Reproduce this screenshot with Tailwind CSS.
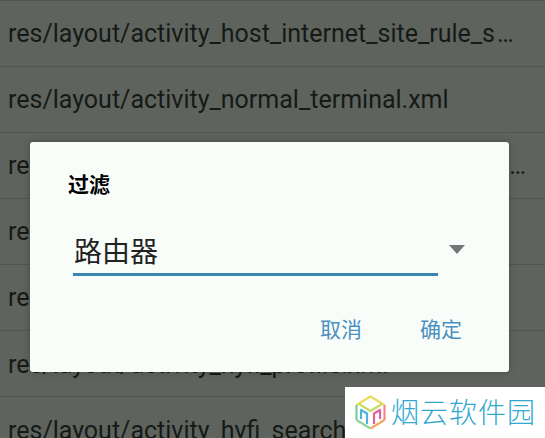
<!DOCTYPE html>
<html lang="en">
<head>
<meta charset="UTF-8">
<title>过滤</title>
<script src="https://cdn.jsdelivr.net/npm/@tailwindcss/browser@4"></script>
</head>
<body class="relative w-[545px] h-[438px] overflow-hidden bg-[#5f635e] font-['Roboto','Noto_Sans_CJK_SC',sans-serif]">
	<!-- list behind the dialog -->
	<div class="h-[438px] overflow-hidden text-[25px] text-[#151a16] whitespace-nowrap">
		<div class="h-[66px] border-t border-[#525650] pl-2 pt-px flex items-center">res/layout/activity_host_internet_site_rule_s<span class="ml-[2px]">…</span></div>
		<div class="h-[66px] border-t border-[#525650] pl-2 pt-px flex items-center">res/layout/activity_normal_terminal.xml</div>
		<div class="h-[66px] border-t border-[#525650] pl-2 pt-px flex items-center">res/layout/activity_host_internet_site_rule_li<span class="ml-[15px]">…</span></div>
		<div class="h-[66px] border-t border-[#525650] pl-2 pt-px flex items-center">res/layout/activity_hyfi_main.xml</div>
		<div class="h-[66px] border-t border-[#525650] pl-2 pt-px flex items-center">res/layout/activity_hyfi_guide.xml</div>
		<div class="h-[66px] border-t border-[#525650] pl-2 pt-[2px] flex items-center">res/layout/activity_hyfi_profile.xml</div>
		<div class="h-[66px] border-t border-[#525650] pl-2 pt-[2px] flex items-center">res/layout/activity_hyfi_search.xml</div>
	</div>

	<!-- dialog -->
	<div class="absolute left-[30px] top-[142px] w-[479px] h-[230px] rounded-[3px] bg-[#f8fdf9] shadow-[0_0_7px_rgba(0,0,0,0.25)] flex flex-col">
		<div class="pl-[38px] pt-[32px] text-[21px] leading-[22px] font-bold text-black">过滤</div>
		<div class="ml-[43px] mr-[42px] mt-[26px] flex items-start">
			<div class="w-[365px] h-[54px] pt-[8px] pl-px border-b-[3px] border-[#3b85b2] text-[28px] leading-[46px] text-[#222]">路由器</div>
			<svg class="ml-[11px] mt-[23px]" width="16" height="9" viewBox="0 0 16 9"><path d="M0 0H16L8 9Z" fill="#777"/></svg>
		</div>
		<div class="mt-auto pb-[30px] pr-[47px] flex justify-end gap-[58px] text-[21px] leading-[24px] text-[#4a90c0]">
			<span>取消</span>
			<span>确定</span>
		</div>
	</div>

	<!-- watermark -->
	<div class="absolute right-0 bottom-0 w-[200px] h-[51px] bg-white flex items-center pl-[10px] gap-[5px]">
		<svg width="31" height="35" viewBox="0 0 31 35" fill="none" stroke-width="2.200" stroke-linejoin="round">
			<path d="M1.500 10L15.500 1.500L29.500 10" stroke="#e9dc5a"/>
			<path d="M4 9L15.500 16L27 9" stroke="#c6dc66"/>
			<path d="M1.500 10V25" stroke="#78cf9a"/>
			<path d="M1.500 25L15.500 33.500" stroke="#8ed4a0"/>
			<path d="M15.500 33.500L29.500 25" stroke="#f3a860"/>
			<path d="M29.500 10V25" stroke="#ee8a8a"/>
			<path d="M6 24V15L12 18.500V29" stroke="#4fb4de"/>
			<path d="M19 29V18.500L25 15V24" stroke="#e2609c"/>
		</svg>
		<span class="mt-[2px] text-[28px] leading-none tracking-[1px] text-[#2fa9d0] font-light">烟云软件园</span>
	</div>
</body>
</html>
